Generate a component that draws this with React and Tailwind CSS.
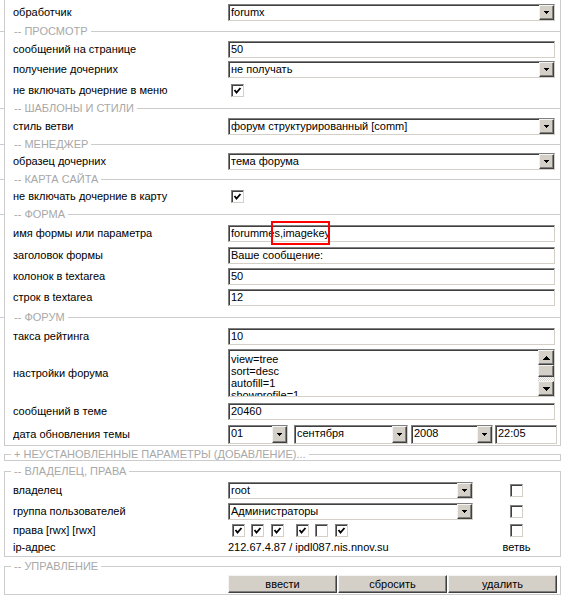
import React from "react";

const sunken =
  "border border-t-[#808080] border-l-[#808080] border-r-[#d4d0c8] border-b-[#d4d0c8] shadow-[inset_1px_1px_0_#404040]";
const raised =
  "bg-[#d4d0c8] border border-t-[#f4f4f4] border-l-[#f4f4f4] border-r-[#404040] border-b-[#404040] shadow-[inset_-1px_-1px_0_#808080]";

const Arrow = ({ up = false, w = 5, h = 3 }) => (
  <svg width={w} height={h} viewBox={`0 0 ${w} ${h}`} shapeRendering="crispEdges">
    <polygon points={up ? `${w / 2},0 ${w},${h} 0,${h}` : `0,0 ${w},0 ${w / 2},${h}`} fill="#000" />
  </svg>
);

const Select = ({ value, className = "w-full h-[17px]" }) => (
  <div className={`flex items-stretch bg-white ${sunken} ${className}`}>
    <span className="flex-1 truncate pl-[2px] leading-[15px]">{value}</span>
    <span className={`flex w-[15px] items-center justify-center ${raised}`}>
      <Arrow />
    </span>
  </div>
);

const Input = ({ value, className = "w-full h-[17px]" }) => (
  <div className={`bg-white pl-[2px] leading-[15px] ${sunken} ${className}`}>{value}</div>
);

const Checkbox = ({ checked = false, className = "" }) => (
  <span className={`flex h-[13px] w-[13px] items-center justify-center bg-white ${sunken} ${className}`}>
    {checked && (
      <svg width="9" height="9" viewBox="0 0 9 9">
        <polyline points="1.5,4 3.5,6.5 7.5,2" fill="none" stroke="#000" strokeWidth="1.8" />
      </svg>
    )}
  </span>
);

const Row = ({ label, h, children }) => (
  <div className={`flex items-center ${h}`}>
    <div className="w-[215px] shrink-0 truncate">{label}</div>
    <div className="w-[327px]">{children}</div>
  </div>
);

const Sep = ({ title, h }) => (
  <div className={`-ml-[13px] flex items-center ${h}`}>
    <div className="h-px w-[4px] bg-[#cccccc]" />
    <span className="ml-[10px] mr-[3px] text-[#a8a8a8]">{title}</span>
    <div className="h-px flex-1 bg-[#cccccc]" />
  </div>
);

const Legend = ({ children }) => (
  <legend className="ml-[6px] px-[3px] leading-[11px] text-[#a8a8a8]">{children}</legend>
);

const Textarea = () => (
  <div className={`flex h-[48px] w-full bg-white ${sunken}`}>
    <div className="flex-1 overflow-hidden pl-[2px] pt-[3px] leading-[12px]">
      <div>view=tree</div>
      <div>sort=desc</div>
      <div>autofill=1</div>
      <div>showprofile=1</div>
    </div>
    <div className="flex w-[16px] flex-col">
      <span className={`flex h-[15px] items-center justify-center ${raised}`}>
        <Arrow up w={7} h={4} />
      </span>
      <span className={`h-[12px] ${raised}`} />
      <span className="flex-1 bg-[repeating-conic-gradient(#d4d0c8_0_25%,#ffffff_0_50%)] bg-[length:2px_2px]" />
      <span className={`flex h-[15px] items-center justify-center ${raised}`}>
        <Arrow w={7} h={4} />
      </span>
    </div>
  </div>
);

export default function App() {
  return (
    <div className="min-h-screen bg-white font-['Liberation_Sans',Arial,sans-serif] text-[11px] leading-[13px] text-black">
      <div className="ml-[4px] w-[557px] border-x border-b border-[#cccccc] pl-[8px] pt-[3px]">
        <Row h="h-[19px]" label="обработчик">
          <Select value="forumx" />
        </Row>
        <Sep h="h-[18px]" title="-- ПРОСМОТР" />
        <Row h="h-[19px]" label="сообщений на странице">
          <Input value="50" />
        </Row>
        <Row h="h-[21px]" label="получение дочерних">
          <Select value="не получать" />
        </Row>
        <Row h="h-[20px]" label="не включать дочерние в меню">
          <Checkbox checked className="ml-[3px]" />
        </Row>
        <Sep h="h-[17px]" title="-- ШАБЛОНЫ И СТИЛИ" />
        <Row h="h-[18px]" label="стиль ветви">
          <Select value="форум структурированный [comm]" />
        </Row>
        <Sep h="h-[18px]" title="-- МЕНЕДЖЕР" />
        <Row h="h-[17px]" label="образец дочерних">
          <Select value="тема форума" />
        </Row>
        <Sep h="h-[18px]" title="-- КАРТА САЙТА" />
        <Row h="h-[17px]" label="не включать дочерние в карту">
          <Checkbox checked className="ml-[3px]" />
        </Row>
        <Sep h="h-[18px]" title="-- ФОРМА" />
        <Row h="h-[21px]" label="имя формы или параметра">
          <div className="relative">
            <Input value="forummes,imagekey" />
            <div className="absolute left-[43px] top-[-4px] h-[24px] w-[59px] border-2 border-[#ff0000]" />
          </div>
        </Row>
        <Row h="h-[22px]" label="заголовок формы">
          <Input value="Ваше сообщение:" />
        </Row>
        <Row h="h-[21px]" label="колонок в textarea">
          <Input value="50" />
        </Row>
        <Row h="h-[21px]" label="строк в textarea">
          <Input value="12" />
        </Row>
        <Sep h="h-[18px]" title="-- ФОРУМ" />
        <Row h="h-[21px]" label="такса рейтинга">
          <Input value="10" />
        </Row>
        <Row h="h-[52px]" label="настройки форума">
          <Textarea />
        </Row>
        <Row h="h-[24px]" label="сообщений в теме">
          <Input value="20460" />
        </Row>
        <Row h="h-[22px]" label="дата обновления темы">
          <div className="flex w-[329px]">
            <Select value="01" className="h-[19px] w-[60px]" />
            <Select value="сентября" className="ml-[6px] h-[19px] w-[114px]" />
            <Select value="2008" className="ml-[3px] h-[19px] w-[82px]" />
            <Input value="22:05" className="ml-[2px] h-[19px] w-[62px]" />
          </div>
        </Row>
      </div>

      <fieldset className="ml-[4px] mt-[3px] w-[557px] border border-[#cccccc]">
        <Legend>+ НЕУСТАНОВЛЕННЫЕ ПАРАМЕТРЫ (ДОБАВЛЕНИЕ)...</Legend>
      </fieldset>

      <fieldset className="ml-[4px] mt-[5px] w-[557px] border border-[#cccccc]">
        <Legend>-- ВЛАДЕЛЕЦ, ПРАВА</Legend>
        <div className="pb-[1px] pl-[8px] pt-[3px]">
          <div className="flex h-[21px] items-center">
            <div className="w-[215px]">владелец</div>
            <Select value="root" className="h-[17px] w-[245px]" />
            <div className="flex w-[87px] justify-center">
              <Checkbox />
            </div>
          </div>
          <div className="flex h-[20px] items-center">
            <div className="w-[215px]">группа пользователей</div>
            <Select value="Администраторы" className="h-[17px] w-[245px]" />
            <div className="flex w-[87px] justify-center">
              <Checkbox />
            </div>
          </div>
          <div className="flex h-[19px] items-center">
            <div className="w-[215px]">права [rwx] [rwx]</div>
            <div className="flex w-[245px]">
              <Checkbox checked className="ml-[4px]" />
              <Checkbox checked className="ml-[6px]" />
              <Checkbox checked className="ml-[7px]" />
              <Checkbox checked className="ml-[12px]" />
              <Checkbox className="ml-[6px]" />
              <Checkbox checked className="ml-[7px]" />
            </div>
            <div className="flex w-[87px] justify-center">
              <Checkbox />
            </div>
          </div>
          <div className="flex h-[15px] items-center">
            <div className="w-[215px]">ip-адрес</div>
            <div className="w-[245px]">212.67.4.87 / ipdl087.nis.nnov.su</div>
            <div className="w-[87px] text-center">ветвь</div>
          </div>
        </div>
      </fieldset>

      <fieldset className="ml-[4px] mt-[4px] w-[557px] border border-[#cccccc]">
        <Legend>-- УПРАВЛЕНИЕ</Legend>
        <div className="flex gap-[1px] pb-[1px] pl-[223px] pt-[3px]">
          <button className={`h-[18px] w-[109px] ${raised}`}>ввести</button>
          <button className={`h-[18px] w-[109px] ${raised}`}>сбросить</button>
          <button className={`h-[18px] w-[109px] ${raised}`}>удалить</button>
        </div>
      </fieldset>
    </div>
  );
}
